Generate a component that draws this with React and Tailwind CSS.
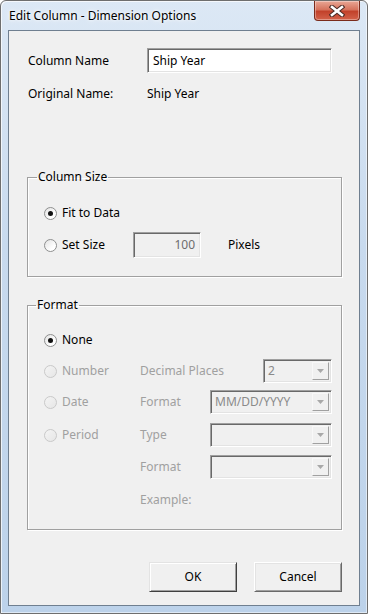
import React from 'react';

function Radio({ checked, disabled, label }) {
  return (
    <div className="flex items-center">
      <span
        className={`relative w-[13px] h-[13px] rounded-full border flex items-center justify-center ${
          disabled
            ? 'border-[#c9c9c9] bg-[linear-gradient(135deg,#f4f4f4,#e6e6e6)]'
            : 'border-[#8e8f8f] bg-[linear-gradient(135deg,#e2e2e2,#ffffff_70%)]'
        }`}
      >
        {checked && <span className="w-[5px] h-[5px] rounded-full bg-[#111]" />}
      </span>
      <span className={`ml-[5px] ${disabled ? 'text-[#a0a0a0]' : 'text-black'}`}>{label}</span>
    </div>
  );
}

const sunken =
  'border border-t-[#a0a0a0] border-l-[#a0a0a0] border-r-white border-b-white shadow-[inset_1px_1px_0_#696969,inset_-1px_-1px_0_#e3e3e3]';

function Combo({ value, className }) {
  return (
    <div className={`${sunken} bg-[#f0f0f0] h-[24px] flex items-stretch ${className}`}>
      <div className="flex-1 pl-[4px] flex items-center text-[#8a8a8a]">{value}</div>
      <div className="w-[17px] my-[2px] mr-[2px] border border-t-[#f8f8f8] border-l-[#f8f8f8] border-r-[#a0a0a0] border-b-[#a0a0a0] bg-[#f0f0f0] flex items-center justify-center">
        <svg width="7" height="4" viewBox="0 0 7 4">
          <path d="M0 0 L7 0 L3.5 4 Z" fill="#a8a8a8" />
        </svg>
      </div>
    </div>
  );
}

function Button({ children, isDefault }) {
  return (
    <button
      className={`w-[88px] h-[30px] bg-[#f0f0f0] text-black border ${
        isDefault
          ? 'border-t-[#e3e3e3] border-l-[#e3e3e3] border-r-[#404040] border-b-[#404040] shadow-[inset_1px_1px_0_#fff,inset_-1px_-1px_0_#a0a0a0]'
          : 'border-t-[#fff] border-l-[#fff] border-r-[#696969] border-b-[#696969] shadow-[inset_1px_1px_0_#e3e3e3,inset_-1px_-1px_0_#a0a0a0]'
      }`}
    >
      {children}
    </button>
  );
}

export default function App() {
  return (
    <div className="w-[368px] h-[614px] font-['Noto_Sans',sans-serif] text-[12px] leading-[16px]">
      <div className="w-full h-full flex flex-col rounded-t-[6px] border border-[#6e6e6e] bg-[linear-gradient(180deg,#dce8f5_0%,#c8daee_40%,#bcd2ea_100%)] shadow-[inset_1px_1px_0_rgba(255,255,255,0.7),inset_-1px_-1px_0_rgba(255,255,255,0.5)]">
        {/* Title bar */}
        <div className="h-[29px] flex items-start">
          <span className="ml-[8px] mt-[7px] text-black [text-shadow:0_0_6px_#fff,0_0_3px_#fff]">
            Edit Column - Dimension Options
          </span>
          <div className="ml-auto mr-[7px] w-[46px] h-[20px] rounded-b-[4px] border border-t-0 border-[#7a2b1c] bg-[linear-gradient(180deg,#e9a795_0%,#d6735d_45%,#c2422b_55%,#d3624a_100%)] shadow-[inset_0_0_0_1px_rgba(255,255,255,0.35)] flex items-center justify-center">
            <svg width="16" height="12" viewBox="0 0 16 12">
              <path d="M3 2 L13 10 M13 2 L3 10" stroke="#4a2a24" strokeWidth="4.6" strokeLinecap="square" />
              <path d="M3 2 L13 10 M13 2 L3 10" stroke="#fff" strokeWidth="2.6" strokeLinecap="square" />
            </svg>
          </div>
        </div>

        {/* Client area */}
        <div className="flex-1 mx-[7px] mb-[7px] border border-[#6f7f90] bg-[#f0f0f0] flex flex-col">
          <div className="flex items-center mt-[17px] h-[25px]">
            <span className="ml-[19px] w-[119px]">Column Name</span>
            <div className={`${sunken} bg-white w-[185px] h-[25px] flex items-center pl-[5px]`}>Ship Year</div>
          </div>
          <div className="flex items-center mt-[13px] h-[16px]">
            <span className="ml-[19px] w-[119px]">Original Name:</span>
            <span>Ship Year</span>
          </div>

          <fieldset className="ml-[18px] mt-[67px] w-[315px] border border-[#a0a0a0] shadow-[inset_1px_1px_0_#fff,1px_1px_0_#fff] pt-[15px] pb-[18px]">
            <legend className="ml-[9px] px-[1px]">Column Size</legend>
            <div className="h-[26px] flex items-center pl-[16px]">
              <Radio checked label="Fit to Data" />
            </div>
            <div className="h-[26px] mt-[6px] flex items-center pl-[16px]">
              <div className="w-[89px]">
                <Radio label="Set Size" />
              </div>
              <div className={`${sunken} bg-[#f0f0f0] w-[68px] h-[26px] flex items-center justify-end pr-[5px] text-[#6d6d6d]`}>100</div>
              <span className="ml-[27px]">Pixels</span>
            </div>
          </fieldset>

          <fieldset className="ml-[18px] mt-[20px] w-[315px] border border-[#a0a0a0] shadow-[inset_1px_1px_0_#fff,1px_1px_0_#fff] pt-[15px] pb-[17px]">
            <legend className="ml-[8px] px-[1px]">Format</legend>
            <div className="h-[24px] flex items-center pl-[16px]">
              <Radio checked label="None" />
            </div>
            <div className="h-[24px] mt-[7px] flex items-center pl-[16px]">
              <div className="w-[96px]">
                <Radio disabled label="Number" />
              </div>
              <span className="text-[#a0a0a0] w-[123px]">Decimal Places</span>
              <Combo value="2" className="w-[69px]" />
            </div>
            <div className="h-[24px] mt-[7px] flex items-center pl-[16px]">
              <div className="w-[96px]">
                <Radio disabled label="Date" />
              </div>
              <span className="text-[#a0a0a0] w-[70px]">Format</span>
              <Combo value="MM/DD/YYYY" className="w-[122px]" />
            </div>
            <div className="h-[24px] mt-[9px] flex items-center pl-[16px]">
              <div className="w-[96px]">
                <Radio disabled label="Period" />
              </div>
              <span className="text-[#a0a0a0] w-[70px]">Type</span>
              <Combo value="" className="w-[122px]" />
            </div>
            <div className="h-[24px] mt-[8px] flex items-center pl-[112px]">
              <span className="text-[#a0a0a0] w-[70px]">Format</span>
              <Combo value="" className="w-[122px]" />
            </div>
            <div className="h-[24px] mt-[9px] flex items-center pl-[112px]">
              <span className="text-[#a0a0a0]">Example:</span>
            </div>
          </fieldset>

          <div className="mt-[32px] flex justify-end gap-[17px] mr-[17px]">
            <Button isDefault>OK</Button>
            <Button>Cancel</Button>
          </div>
        </div>
      </div>
    </div>
  );
}
